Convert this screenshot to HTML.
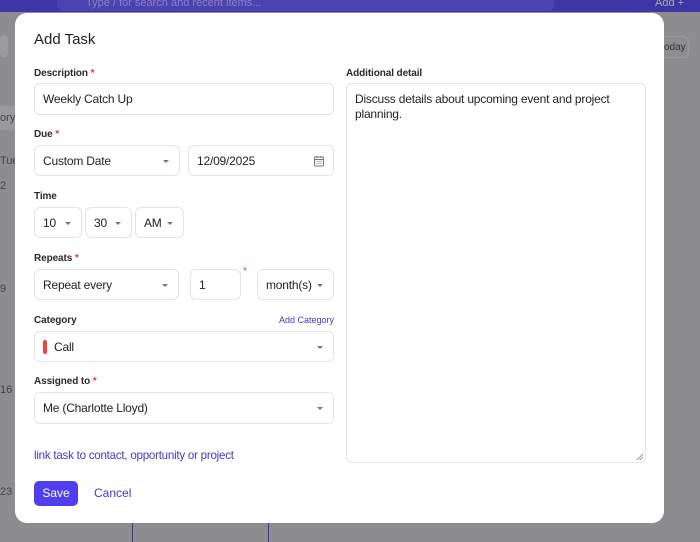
<!DOCTYPE html>
<html><head><style>
*{box-sizing:border-box;margin:0;padding:0}
body{width:700px;height:542px;overflow:hidden;position:relative;background:#8d8d8f;font-family:"Liberation Sans",sans-serif;color:#222}
.a{position:absolute}
.top{left:0;top:0;width:700px;height:12px;background:#3d36a6}
.search{left:57px;top:0;width:497px;height:11px;background:#4a43b0;border-radius:0 0 6px 6px}
.modal{left:15px;top:13px;width:649px;height:510px;background:#fff;border-radius:12px}
.lbl{font-size:10px;color:#2a2a2a;font-weight:600;letter-spacing:-0.1px}
.req{color:#e53935}
.f{border:1px solid #e4e4e7;border-radius:6px;background:#fff;font-size:12px;letter-spacing:-0.2px;color:#222;display:flex;align-items:center;padding-left:8px}
.c{position:absolute;right:10px;top:50%;margin-top:-1px;width:0;height:0;border-left:3px solid transparent;border-right:3px solid transparent;border-top:3px solid #777}
</style></head><body>
<div class="a top"></div><div class="a search"></div>
<div class="a" style="left:86px;top:0;font-size:11px;color:#8880c8;line-height:6px">Type / for search and recent items...</div>
<div class="a" style="left:655px;top:0;font-size:11px;color:#aaa;line-height:6px">Add +</div>
<div class="a" style="left:0;top:35px;width:8px;height:22px;background:#9b9b9d;border-radius:4px"></div>
<div class="a" style="left:0;top:106px;width:15px;height:24px;background:#9a9a9c"></div>
<div class="a" style="left:0;top:112px;font-size:11px;color:#444">ory</div>
<div class="a" style="left:0;top:155px;font-size:11px;color:#444">Tue</div>
<div class="a" style="left:0;top:180px;font-size:11px;color:#444">2</div>
<div class="a" style="left:0;top:283px;font-size:11px;color:#444">9</div>
<div class="a" style="left:0;top:384px;font-size:11px;color:#444">16</div>
<div class="a" style="left:0;top:486px;font-size:11px;color:#444">23</div>
<div class="a" style="left:655px;top:36px;width:34px;height:22px;border:1px solid #999;border-radius:6px;font-size:10px;color:#333;padding:5px 0 0 8px">oday</div>
<div class="a" style="left:132px;top:523px;width:1px;height:19px;background:#3b34b0"></div>
<div class="a" style="left:268px;top:523px;width:1px;height:19px;background:#3b34b0"></div>
<div class="a modal"></div>
<div class="a" style="left:34px;top:31px;font-size:15px;color:#222">Add Task</div>

<div class="a lbl" style="left:34px;top:68px">Description <span class="req">*</span></div>
<div class="a f" style="left:34px;top:83px;width:300px;height:32px">Weekly Catch Up</div>

<div class="a lbl" style="left:34px;top:129px">Due <span class="req">*</span></div>
<div class="a f" style="left:34px;top:145px;width:146px;height:31px">Custom Date<span class="c"></span></div>
<div class="a f" style="left:188px;top:145px;width:146px;height:31px">12/09/2025
<svg style="position:absolute;right:8px;top:9px" width="12" height="12" viewBox="0 0 12 12" fill="none" stroke="#777" stroke-width="1"><rect x="1.5" y="2" width="9" height="9" rx="1"/><line x1="1.5" y1="4.5" x2="10.5" y2="4.5"/><line x1="4" y1="1" x2="4" y2="3"/><line x1="8" y1="1" x2="8" y2="3"/><path d="M3.5 6.5h1M5.5 6.5h1M7.5 6.5h1M3.5 8.5h1M5.5 8.5h1M7.5 8.5h1"/></svg></div>

<div class="a lbl" style="left:34px;top:191px">Time</div>
<div class="a f" style="left:34px;top:207px;width:48px;height:31px">10<span class="c"></span></div>
<div class="a f" style="left:85px;top:207px;width:47px;height:31px">30<span class="c"></span></div>
<div class="a f" style="left:135px;top:207px;width:49px;height:31px">AM<span class="c"></span></div>

<div class="a lbl" style="left:34px;top:253px">Repeats <span class="req">*</span></div>
<div class="a f" style="left:34px;top:269px;width:145px;height:31px">Repeat every<span class="c"></span></div>
<div class="a f" style="left:190px;top:269px;width:51px;height:31px">1</div>
<div class="a req" style="left:243px;top:266px;font-size:10px">*</div>
<div class="a f" style="left:257px;top:269px;width:77px;height:31px">month(s)<span class="c"></span></div>

<div class="a lbl" style="left:34px;top:315px">Category</div>
<div class="a" style="left:279px;top:315px;font-size:9px;color:#4338ca">Add Category</div>
<div class="a f" style="left:34px;top:331px;width:300px;height:31px"><span style="display:inline-block;width:4px;height:14px;background:#ef4444;border-radius:2px;margin-right:7px"></span>Call<span class="c"></span></div>

<div class="a lbl" style="left:34px;top:376px">Assigned to <span class="req">*</span></div>
<div class="a f" style="left:34px;top:392px;width:300px;height:32px">Me (Charlotte Lloyd)<span class="c"></span></div>

<div class="a" style="left:34px;top:449px;font-size:11.6px;letter-spacing:-0.25px;color:#4338ca">link task to contact, opportunity or project</div>
<div class="a" style="left:34px;top:481px;width:44px;height:25px;background:#4f3ff0;border-radius:5px;color:#fff;font-size:12px;text-align:center;line-height:25px">Save</div>
<div class="a" style="left:94px;top:486px;font-size:12px;color:#4338ca">Cancel</div>

<div class="a lbl" style="left:346px;top:68px">Additional detail</div>
<div class="a" style="left:346px;top:83px;width:300px;height:380px;border:1px solid #e4e4e7;border-radius:6px;padding:8px 8px;font-size:12px;letter-spacing:-0.2px;line-height:15px;color:#222">Discuss details about upcoming event and project planning.
<svg style="position:absolute;right:1px;bottom:1px" width="8" height="8"><path d="M7 1L1 7M7 4L4 7" stroke="#999"/></svg></div>
</body></html>
